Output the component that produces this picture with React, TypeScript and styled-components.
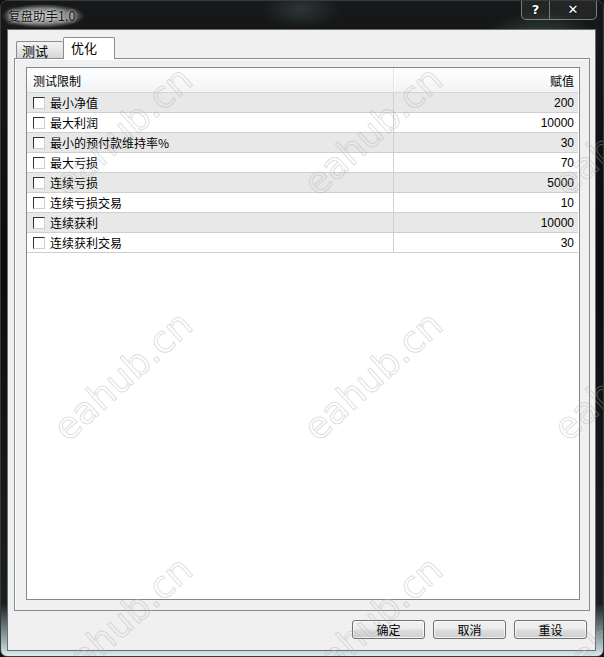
import React from "react";
import styled, {createGlobalStyle, css} from "styled-components";

interface ILimit {
    label: string,
    value: string
}

const limits: ILimit[] = [
    {label: "最小净值", value: "200"},
    {label: "最大利润", value: "10000"},
    {label: "最小的预付款维持率%", value: "30"},
    {label: "最大亏损", value: "70"},
    {label: "连续亏损", value: "5000"},
    {label: "连续亏损交易", value: "10"},
    {label: "连续获利", value: "10000"},
    {label: "连续获利交易", value: "30"}
];

// watermark stamps, tiled every 250 x 245 px
const marks = [
    [122, 130], [372, 130], [622, 130],
    [122, 375], [372, 375], [622, 375],
    [122, 620], [372, 620], [622, 620]
];

const GlobalStyle = createGlobalStyle`
    html, body {
        margin: 0;
        padding: 0;
        background: #111;
    }
`,

    cjk = css`
        font-family: "Noto Sans CJK SC", "Liberation Sans", sans-serif;
        font-size: 12px;
        color: #000;
    `,

    Window = styled.div`
        position: relative;
        width: 604px;
        height: 657px;
        display: flex;
        flex-direction: column;
        box-sizing: border-box;
        border: 1px solid #3a3a3a;
        border-radius: 7px;
        overflow: hidden;
        background:
            radial-gradient(ellipse 60px 30px at 540px 40px, rgba(120, 170, 130, 0.35), transparent),
            radial-gradient(ellipse 40px 20px at 300px 8px, rgba(90, 110, 110, 0.35), transparent),
            linear-gradient(to bottom, #161819 0%, #0b0c0d 40%, #1c1f20 92%, #9fb7ba 98%, #dcecef 100%);
    `,

    TitleBar = styled.div`
        height: 28px;
        flex: none;
        display: flex;
        align-items: flex-start;
        justify-content: space-between;
    `,

    // aero glass caption: dark text on a soft light glow
    Title = styled.div`
        ${cjk}
        font-size: 12.5px;
        color: #151515;
        margin: 3px 0 0 0;
        padding: 2px 10px 3px 7px;
        background: radial-gradient(closest-side, rgba(215, 215, 215, 0.8), rgba(200, 200, 200, 0.55) 65%, transparent);
        text-shadow: 0 0 3px rgba(255, 255, 255, 0.9), 0 0 6px rgba(255, 255, 255, 0.6);
    `,

    Caption = styled.div`
        display: flex;
        margin: -1px 6px 0 0;
        border: 1px solid rgba(200, 200, 200, 0.55);
        border-top: none;
        border-radius: 0 0 5px 5px;
        background: rgba(255, 255, 255, 0.06);
    `,

    CaptionButton = styled.div<{$wide?: boolean}>`
        width: ${(p) => (p.$wide ? "46px" : "27px")};
        height: 19px;
        display: flex;
        align-items: center;
        justify-content: center;
        font-family: "DejaVu Sans", sans-serif;
        font-weight: bold;
        font-size: 13px;
        color: #fff;
        text-shadow: 0 0 2px #000;
        & + & {
            border-left: 1px solid rgba(200, 200, 200, 0.5);
        }
    `,

    Frame = styled.div`
        flex: 1;
        display: flex;
        padding: 0 7px 5px 6px;
    `,

    Client = styled.div`
        flex: 1;
        display: flex;
        flex-direction: column;
        background: #f0f0f0;
        border: 1px solid #6d6d6d;
        padding: 7px 0 0 6px;
    `,

    TabStrip = styled.div`
        display: flex;
        align-items: flex-end;
        height: 22px;
        position: relative;
        z-index: 1;
    `,

    Tab = styled.div<{$active?: boolean}>`
        ${cjk}
        box-sizing: border-box;
        display: flex;
        align-items: center;
        border: 1px solid #898c95;
        border-radius: 2px 2px 0 0;
        font-size: 13px;
        ${(p) => (p.$active
        ? css`
            width: 52px;
            height: 22px;
            padding: 0 0 2px 7px;
            background: #fff;
            border-bottom: none;
        `
        : css`
            width: 47px;
            height: 18px;
            margin-left: 2px;
            padding: 1px 0 0 5px;
            border-right: none;
            background: linear-gradient(to bottom, #f4f4f4, #e6e6e6 50%, #d6d6d6);
        `)}
    `,

    Panel = styled.div`
        flex: 1;
        display: flex;
        margin: -1px 5px 0 0;
        border: 1px solid #898c95;
        box-shadow: inset 1px 1px 0 #fff;
        padding: 8px 9px 10px 11px;
    `,

    ListBox = styled.div`
        flex: 1;
        background: #fff;
        border: 1px solid #828790;
        display: flex;
        flex-direction: column;
    `,

    Grid = styled.div`
        display: grid;
        grid-template-columns: 366px 185px;
    `,

    HeadCell = styled.div<{$right?: boolean}>`
        ${cjk}
        height: 24px;
        display: flex;
        align-items: center;
        background: linear-gradient(to bottom, #ffffff, #f7f8f9 60%, #f1f2f3);
        border-bottom: 1px solid #d5d5d5;
        padding: 0 ${(p) => (p.$right ? "4px" : "0")} 0 ${(p) => (p.$right ? "0" : "6px")};
        justify-content: ${(p) => (p.$right ? "flex-end" : "flex-start")};
        ${(p) => p.$right && css`
            border-left: 1px solid #e4e5e6;
            box-shadow: inset 1px 0 0 #fff;
        `}
    `,

    Cell = styled.div<{$shade: boolean, $right?: boolean}>`
        height: 19px;
        display: flex;
        align-items: center;
        background: ${(p) => (p.$shade ? "#e8e8e8" : "#fff")};
        border-bottom: 1px solid #cfcfcf;
        ${(p) => (p.$right
        ? css`
            justify-content: flex-end;
            padding-right: 4px;
            border-left: 1px solid #cfcfcf;
            font-family: "Liberation Sans", sans-serif;
            font-size: 12px;
            color: #000;
        `
        : css`
            ${cjk}
            padding-left: 6px;
        `)}
    `,

    Check = styled.span`
        box-sizing: border-box;
        width: 12px;
        height: 12px;
        margin-right: 5px;
        background: #fff;
        border-top: 1px solid #2e2e2e;
        border-left: 1px solid #2e2e2e;
        border-right: 1px solid #cfcfcf;
        border-bottom: 1px solid #cfcfcf;
    `,

    ButtonRow = styled.div`
        display: flex;
        justify-content: flex-end;
        gap: 8px;
        padding: 9px 8px 11px 0;
    `,

    Button = styled.button`
        ${cjk}
        width: 73px;
        height: 19px;
        padding: 0;
        border: 1px solid #707070;
        border-radius: 3px;
        background: linear-gradient(to bottom, #f2f2f2 0%, #ebebeb 48%, #dddddd 52%, #cfcfcf 100%);
        box-shadow: inset 0 0 0 1px rgba(255, 255, 255, 0.7);
    `,

    Marks = styled.div`
        position: absolute;
        inset: 0;
        pointer-events: none;
        overflow: hidden;
    `,

    Mark = styled.span<{$x: number, $y: number}>`
        position: absolute;
        left: ${(p) => p.$x}px;
        top: ${(p) => p.$y}px;
        transform: translate(-50%, -50%) rotate(-42deg);
        font-family: "DejaVu Sans", sans-serif;
        font-size: 37px;
        color: transparent;
        -webkit-text-stroke: 1px rgba(175, 175, 175, 0.42);
        white-space: nowrap;
    `;

export default function App () {

    return (
        <>
            <GlobalStyle />
            <Window>
                <TitleBar>
                    <Title>
                        复盘助手1.0
                    </Title>
                    <Caption>
                        <CaptionButton>
                            ?
                        </CaptionButton>
                        <CaptionButton $wide>
                            ✕
                        </CaptionButton>
                    </Caption>
                </TitleBar>
                <Frame>
                    <Client>
                        <TabStrip>
                            <Tab>
                                测试
                            </Tab>
                            <Tab $active>
                                优化
                            </Tab>
                        </TabStrip>
                        <Panel>
                            <ListBox>
                                <Grid>
                                    <HeadCell>
                                        测试限制
                                    </HeadCell>
                                    <HeadCell $right>
                                        赋值
                                    </HeadCell>
                                    {limits.map((item, i) => (
                                        <React.Fragment key={item.label}>
                                            <Cell $shade={i % 2 === 0}>
                                                <Check />
                                                {item.label}
                                            </Cell>
                                            <Cell $shade={i % 2 === 0} $right>
                                                {item.value}
                                            </Cell>
                                        </React.Fragment>
                                    ))}
                                </Grid>
                            </ListBox>
                        </Panel>
                        <ButtonRow>
                            <Button>
                                确定
                            </Button>
                            <Button>
                                取消
                            </Button>
                            <Button>
                                重设
                            </Button>
                        </ButtonRow>
                    </Client>
                </Frame>
                <Marks>
                    {marks.map(([x, y]) => (
                        <Mark key={`${x}-${y}`} $x={x} $y={y}>
                            eahub.cn
                        </Mark>
                    ))}
                </Marks>
            </Window>
        </>
    );

}
